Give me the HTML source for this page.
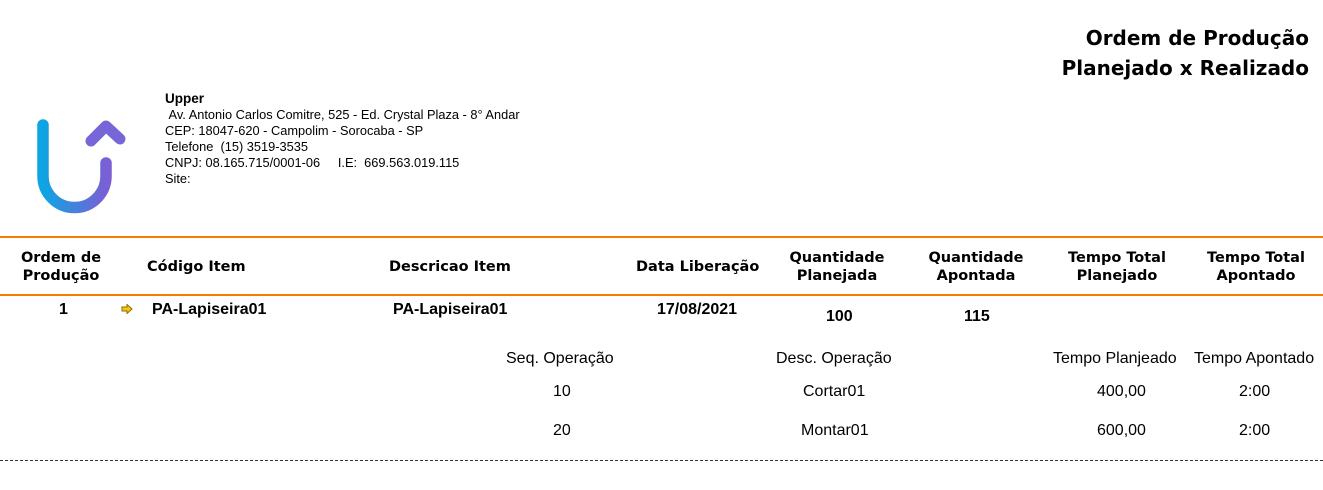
<!DOCTYPE html>
<html><head><meta charset="utf-8"><style>
body{margin:0;width:1323px;height:490px;background:#fff;position:relative;overflow:hidden;font-family:"Liberation Sans",sans-serif;color:#000}
.a{position:absolute;white-space:nowrap}
.t{font-family:"DejaVu Sans",sans-serif;font-weight:bold;font-size:20px;right:14px;text-align:right}
.c{font-size:12.8px;left:165px;line-height:16px}
.h{font-family:"DejaVu Sans",sans-serif;font-weight:bold;font-size:14.5px;text-align:center;line-height:18px}
.d{font-weight:bold;font-size:16px}
.s{font-size:16px;text-align:center}
</style></head><body>
<div class="a t" style="top:26px">Ordem de Produção</div>
<div class="a t" style="top:56px">Planejado x Realizado</div>
<svg class="a" style="left:0;top:100px" width="150" height="120" viewBox="0 100 150 120">
<defs><linearGradient id="g" x1="0" x2="1"><stop offset="0" stop-color="#0ea5e2"/><stop offset="1" stop-color="#7a5fd6"/></linearGradient></defs>
<path d="M43 125 V176 A31.5 31.5 0 0 0 106 176 V163" fill="none" stroke="url(#g)" stroke-width="11.5" stroke-linecap="round"/>
<path d="M91 141 L106 126 L120 139" fill="none" stroke="#7766d8" stroke-width="11" stroke-linecap="round" stroke-linejoin="round"/>
</svg>
<div class="a c" style="top:91px"><b style="font-size:13.5px">Upper</b><br>&nbsp;Av. Antonio Carlos Comitre, 525 - Ed. Crystal Plaza - 8° Andar<br>CEP: 18047-620 - Campolim - Sorocaba - SP<br>Telefone&nbsp; (15) 3519-3535<br>CNPJ: 08.165.715/0001-06 &nbsp; &nbsp; I.E:&nbsp; 669.563.019.115<br>Site:</div>
<div class="a" style="left:0;top:236px;width:1323px;height:2px;background:#f57c00"></div>
<div class="a" style="left:0;top:294px;width:1323px;height:2px;background:#f57c00"></div>
<div class="a h" style="left:0;width:122px;top:249px">Ordem de<br>Produção</div>
<div class="a h" style="left:147px;top:258px">Código Item</div>
<div class="a h" style="left:389px;top:258px">Descricao Item</div>
<div class="a h" style="left:636px;top:258px">Data Liberação</div>
<div class="a h" style="left:776px;width:122px;top:249px">Quantidade<br>Planejada</div>
<div class="a h" style="left:915px;width:122px;top:249px">Quantidade<br>Apontada</div>
<div class="a h" style="left:1056px;width:122px;top:249px">Tempo Total<br>Planejado</div>
<div class="a h" style="left:1195px;width:122px;top:249px">Tempo Total<br>Apontado</div>
<div class="a d" style="left:59px;top:301px">1</div>
<svg class="a" style="left:121px;top:304px" width="12" height="10"><path d="M1 3H6V0.5L11 5L6 9.5V7H1Z" fill="#f5c518" stroke="#8a6d00" stroke-width="1"/></svg>
<div class="a d" style="left:152px;top:301px">PA-Lapiseira01</div>
<div class="a d" style="left:393px;top:301px">PA-Lapiseira01</div>
<div class="a d" style="left:657px;top:301px">17/08/2021</div>
<div class="a d" style="left:826px;top:308px">100</div>
<div class="a d" style="left:964px;top:308px">115</div>
<div class="a s" style="left:506px;top:350px">Seq. Operação</div>
<div class="a s" style="left:776px;top:350px">Desc. Operação</div>
<div class="a s" style="left:1053px;top:350px">Tempo Planjeado</div>
<div class="a s" style="left:1194px;top:350px">Tempo Apontado</div>
<div class="a s" style="left:553px;top:383px">10</div>
<div class="a s" style="left:803px;top:383px">Cortar01</div>
<div class="a s" style="left:1097px;top:383px">400,00</div>
<div class="a s" style="left:1239px;top:383px">2:00</div>
<div class="a s" style="left:553px;top:422px">20</div>
<div class="a s" style="left:801px;top:422px">Montar01</div>
<div class="a s" style="left:1097px;top:422px">600,00</div>
<div class="a s" style="left:1239px;top:422px">2:00</div>
<div class="a" style="left:0;top:460px;width:1323px;border-top:1px dashed #333"></div>
</body></html>
